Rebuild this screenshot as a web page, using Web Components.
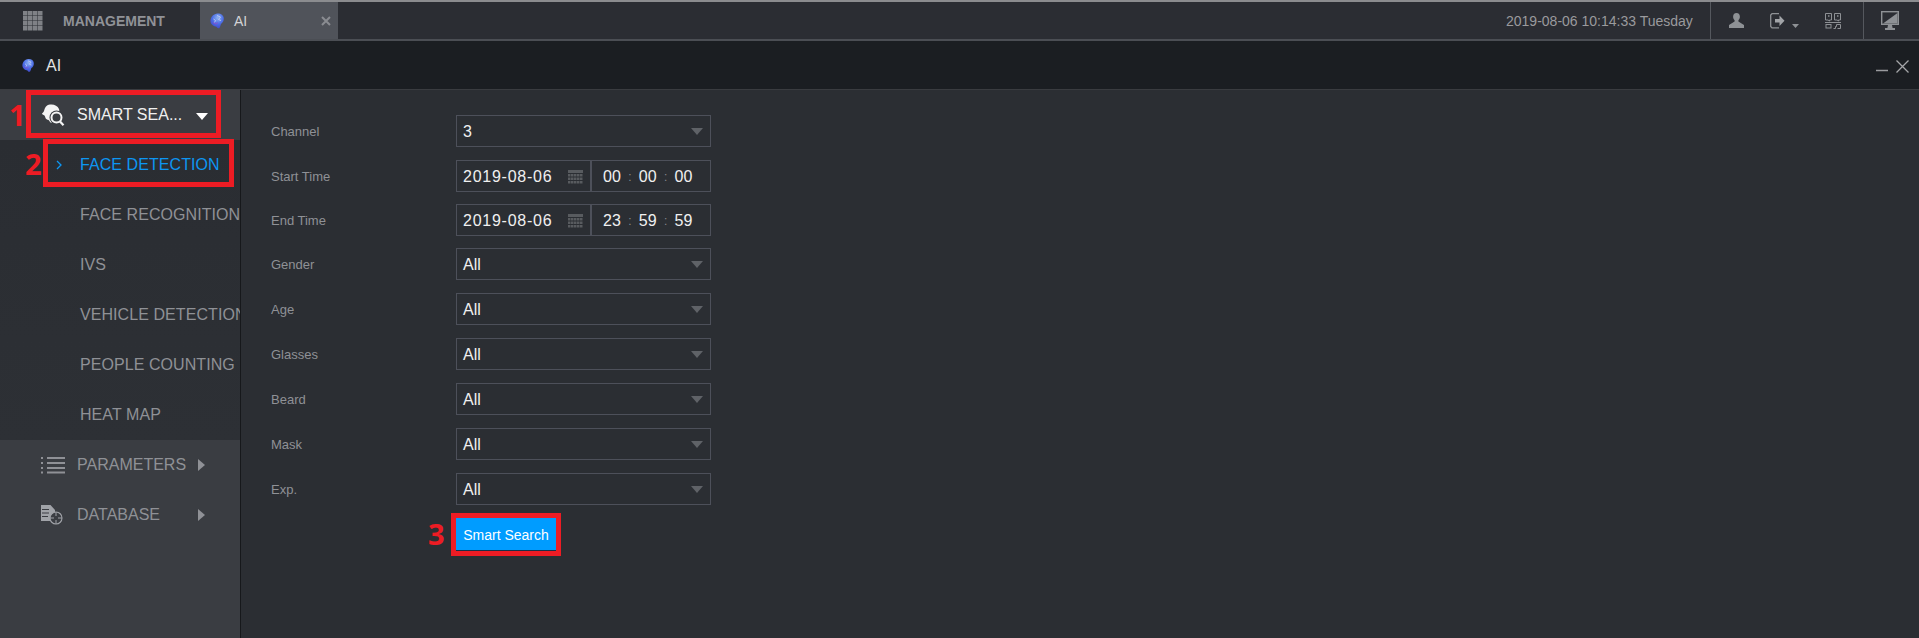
<!DOCTYPE html>
<html>
<head>
<meta charset="utf-8">
<title>AI</title>
<style>
  html, body { margin: 0; height: 100%; background: #2b2e33; overflow: hidden; }
  body { font-family: "Liberation Sans", Arial, sans-serif; }
</style>
</head>
<body>
<app-shell>
  <top-bar slot="top"></top-bar>
  <title-bar slot="title"></title-bar>
  <side-nav slot="nav">
    <nav-group label="SMART SEA..." icon="search" open></nav-group>
    <sub-menu>
      <sub-item active>FACE DETECTION</sub-item>
      <sub-item>FACE RECOGNITION</sub-item>
      <sub-item>IVS</sub-item>
      <sub-item>VEHICLE DETECTION</sub-item>
      <sub-item>PEOPLE COUNTING</sub-item>
      <sub-item>HEAT MAP</sub-item>
    </sub-menu>
    <nav-group label="PARAMETERS" icon="list"></nav-group>
    <nav-group label="DATABASE" icon="db"></nav-group>
  </side-nav>
  <search-form slot="main">
    <form-row label="Channel"><select-field value="3"></select-field></form-row>
    <form-row label="Start Time"><date-time date="2019-08-06" time="00,00,00"></date-time></form-row>
    <form-row label="End Time"><date-time date="2019-08-06" time="23,59,59"></date-time></form-row>
    <form-row label="Gender"><select-field value="All"></select-field></form-row>
    <form-row label="Age"><select-field value="All"></select-field></form-row>
    <form-row label="Glasses"><select-field value="All"></select-field></form-row>
    <form-row label="Beard"><select-field value="All"></select-field></form-row>
    <form-row label="Mask"><select-field value="All"></select-field></form-row>
    <form-row label="Exp."><select-field value="All"></select-field></form-row>
    <form-row><search-button>Smart Search</search-button></form-row>
  </search-form>
  <red-callout slot="marks" num="1" style="--x:26px;--y:90px;--w:195px;--h:48px;--nx:-17px;--ny:10px"></red-callout>
  <red-callout slot="marks" num="2" style="--x:43px;--y:139px;--w:191px;--h:48px;--nx:-18px;--ny:10px"></red-callout>
  <red-callout slot="marks" num="3" style="--x:451px;--y:513px;--w:110px;--h:43px;--nx:-23px;--ny:6px"></red-callout>
</app-shell>

<script>
const brain = (w, h) => `
  <svg width="${w}" height="${h}" viewBox="0 0 14 16">
    <defs>
      <radialGradient id="b" cx=".55" cy=".3" r=".8">
        <stop offset="0" stop-color="#8fb4f2"/>
        <stop offset=".5" stop-color="#4d6fe6"/>
        <stop offset="1" stop-color="#3d3fc4"/>
      </radialGradient>
    </defs>
    <path fill="url(#b)" d="M7 .5c3.500-.5 6.500 1.500 6.800 4.500.2 2.800-1 4.500-2.800 6-.6 1.200-.6 2.800-1.600 4-1.300.6-2.400 0-3-1.200-1-.7-2.800-.4-4-1.800C1 11 0 8.500.6 6.200 1.400 3 4 1 7 .5z"/>
    <path fill="none" stroke="#b9c6f5" stroke-width="1" d="M7 2.500l3.500 1.500-2 2.500 2.500 1M3.500 6l2 1.500-1 2"/>
    <path fill="none" stroke="#8a4fd0" stroke-width=".9" d="M3 9.500l3 1.500 2-1.500"/>
  </svg>`;

// plain helper so every element below stays a few lines
const shadow = (el, html) => {
  el.attachShadow({ mode: "open" }).innerHTML = html;
};

class AppShell extends HTMLElement {
  constructor() {
    super();
    shadow(this, `
      <style>
        :host { display: grid; grid-template: 41px 49px 1fr / 241px 1fr; height: 638px; position: relative; }
        .top { grid-column: 1 / 3; }
        .title { grid-column: 1 / 3; }
      </style>
      <div class="top"><slot name="top"></slot></div>
      <div class="title"><slot name="title"></slot></div>
      <slot name="nav"></slot>
      <slot name="main"></slot>
      <slot name="marks"></slot>
    `);
  }
}

class TopBar extends HTMLElement {
  constructor() {
    super();
    let cells = "";
    for (let y = 0; y < 4; y++) for (let x = 0; x < 4; x++) cells += `<rect x="${x * 5}" y="${y * 5}" width="4.500" height="4.500"/>`;
    shadow(this, `
      <style>
        :host { display: flex; height: 41px; box-sizing: border-box; background: #2b2d33; border-top: 2px solid #8b8c8f; border-bottom: 2px solid #4b4e54; color: #909297; font-size: 14px; align-items: stretch; }
        .home { display: flex; align-items: center; width: 200px; box-sizing: border-box; padding-left: 23px; gap: 20px; font-weight: bold; }
        .tab { display: flex; align-items: center; width: 138px; box-sizing: border-box; background: #50535a; color: #d4d4d6; padding-left: 10px; gap: 10px; }
        .tab .x { margin-left: auto; margin-right: 7px; display: flex; }
        .fill { flex: 1; }
        .clock { width: 204px; align-self: center; color: #9a9a9d; }
        .cell { display: flex; align-items: center; border-left: 1px solid #55585e; box-sizing: border-box; }
        .tools { width: 153px; padding-left: 18px; gap: 26px; }
        .screen { width: 56px; padding-left: 17px; }
        svg { display: block; }
      </style>
      <div class="home">
        <svg width="20" height="20" viewBox="0 0 20 20" fill="#7f8186">${cells}</svg>
        <span>MANAGEMENT</span>
      </div>
      <div class="tab">
        ${brain(14, 16)}
        <span>AI</span>
        <span class="x"><svg width="10" height="10" viewBox="0 0 10 10"><path d="M1 1l8 8M9 1l-8 8" stroke="#8a8c91" stroke-width="2"/></svg></span>
      </div>
      <div class="fill"></div>
      <div class="clock">2019-08-06 10:14:33 Tuesday</div>
      <div class="cell tools">
        <svg width="15" height="15" viewBox="0 0 15 15" fill="#8e9195"><path d="M7.500 0c2.200 0 3.400 1.700 3.400 3.800 0 1.500-.7 2.800-1.500 3.500v1.200L15 12v3H0v-3l5.600-3.500V7.300C4.800 6.600 4.100 5.300 4.100 3.800 4.100 1.700 5.300 0 7.500 0z"/></svg>
        <svg width="29" height="16" viewBox="0 0 29 16">
          <path d="M9 .7H2L.7 2v11.500L2 14.800h7" fill="none" stroke="#8e9195" stroke-width="1.300"/>
          <path d="M5 6h4.500V2.500L14.500 7.700 9.500 13V9.500H5z" fill="#a2a4a8"/>
          <path d="M22 11h7l-3.500 4z" fill="#8e9195"/>
        </svg>
        <svg width="16" height="16" viewBox="0 0 16 16" fill="none" stroke="#8e9195">
          <path d="M.5.500h6v6.500h-2v1l-1.500-1h-2.500zM9.500.500h6v6.500h-2v1l-1.500-1h-2.500z"/>
          <path d="M3 3h1.500M12 3h1.500" stroke-width="1.500"/>
          <path d="M0 9.500h16"/>
          <rect x="1" y="11.500" width="5" height="3.500"/>
          <path d="M8.500 15.500h2v-2h1v-2h4v4h-3"/>
        </svg>
      </div>
      <div class="cell screen">
        <svg width="18" height="19" viewBox="0 0 18 19">
          <rect x=".7" y=".7" width="16.600" height="12.600" fill="none" stroke="#8e9195" stroke-width="1.400"/>
          <path d="M2 12.500L16.500 2v10.500z" fill="#8e9195"/>
          <path d="M7 14h4l.6 3H14v2H4v-2h2.400z" fill="#8e9195"/>
        </svg>
      </div>
    `);
  }
}

class TitleBar extends HTMLElement {
  constructor() {
    super();
    shadow(this, `
      <style>
        :host { display: flex; align-items: center; height: 49px; box-sizing: border-box; background: #1b1e22; border-bottom: 1px solid #3a3c40; padding: 1px 10px 0 22px; color: #e4e4e4; font-size: 16px; gap: 12px; }
        .btns { margin-left: auto; display: flex; align-items: center; gap: 8px; padding-top: 1px; }
        svg { display: block; }
      </style>
      ${brain(12, 15)}
      <span>AI</span>
      <div class="btns">
        <svg width="12" height="12" viewBox="0 0 12 12"><path d="M0 10.500h12" stroke="#9a9b9e" stroke-width="1.500"/></svg>
        <svg width="13" height="13" viewBox="0 0 13 13"><path d="M.5.500l12 12M12.500.500l-12 12" stroke="#a5a6a9" stroke-width="1.300"/></svg>
      </div>
    `);
  }
}

class SideNav extends HTMLElement {
  constructor() {
    super();
    shadow(this, `
      <style>
        :host { display: block; background: #3a3d42; border-right: 1px solid #16181b; overflow: hidden; height: 548px; }
      </style>
      <slot></slot>
    `);
  }
}

const navIcons = {
  search: `<svg width="24" height="23" viewBox="0 0 24 23">
    <path fill="#f4f4f4" d="M9 .5c4-.5 7.500 1 9 4.500 1 3-1 9-3 12-1.500 2-4 2.500-5.500 1.500-1-.8-1-2-2-2.500-1.500-.2-2.500-.8-3-2-.2-1-.5-1.500-1-2.500-1-.5-2-1-2.500-1.500 0-1 1.500-1.500 2-3C3.800 4 5 1 9 .5z"/>
    <circle cx="15.500" cy="13.500" r="7" fill="#3a3d42"/>
    <circle cx="15.500" cy="13.500" r="5" fill="none" stroke="#f4f4f4" stroke-width="2"/>
    <path d="M19 17.500l3.500 3.800" stroke="#f4f4f4" stroke-width="2.200"/>
  </svg>`,
  list: `<svg width="24" height="18" viewBox="0 0 24 18" fill="#8f9196">
    <rect x="0" y="1" width="2" height="2"/><rect x="0" y="6" width="2" height="2"/><rect x="0" y="11" width="2" height="2"/><rect x="0" y="15.500" width="2" height="2"/>
    <rect x="6" y="1" width="18" height="2"/><rect x="6" y="6" width="18" height="2"/><rect x="6" y="11" width="18" height="2"/><rect x="6" y="15.500" width="18" height="2"/>
  </svg>`,
  db: `<svg width="22" height="20" viewBox="0 0 22 20">
    <path fill="#a0a3a8" d="M0 0h9.500L14 5v3c-2.500 .5-4.500 3-4.500 8H0z"/>
    <path d="M1 4.500h7M1 8h7M1 11.500h6" stroke="#3a3d42" stroke-width="1.200"/>
    <circle cx="15" cy="13" r="6" fill="#3a3d42" stroke="#a0a3a8" stroke-width="1.100"/>
    <path d="M15 7v4M15 15v4M9 13h4M17 13h4" stroke="#a0a3a8"/>
  </svg>`
};

class NavGroup extends HTMLElement {
  constructor() {
    super();
    const open = this.hasAttribute("open");
    const arrow = open
      ? `<svg width="12" height="7" viewBox="0 0 12 7"><path d="M0 0h12L6 7z" fill="#fff"/></svg>`
      : `<svg width="7" height="12" viewBox="0 0 7 12"><path d="M0 0l7 6-7 6z" fill="#8f9196"/></svg>`;
    shadow(this, `
      <style>
        :host { display: flex; align-items: center; height: 50px; position: relative; color: ${open ? "#f0f0f0" : "#8f9196"}; font-size: 16px; }
        .icon { width: 77px; display: flex; justify-content: flex-start; padding-left: 41px; box-sizing: border-box; }
        .arrow { position: absolute; left: ${open ? 196 : 198}px; top: ${open ? 23 : 19}px; }
        svg { display: block; }
      </style>
      <span class="icon">${navIcons[this.getAttribute("icon")]}</span>
      <span>${this.getAttribute("label")}</span>
      <span class="arrow">${arrow}</span>
    `);
  }
}

class SubMenu extends HTMLElement {
  constructor() {
    super();
    shadow(this, `
      <style>:host { display: block; background: linear-gradient(#2a2d32, #2d3035); }</style>
      <slot></slot>
    `);
  }
}

class SubItem extends HTMLElement {
  constructor() {
    super();
    const active = this.hasAttribute("active");
    shadow(this, `
      <style>
        :host { display: flex; align-items: center; height: 50px; padding-left: 56px; font-size: 16px; letter-spacing: .07px; color: ${active ? "#0d96f2" : "#8f9196"}; white-space: nowrap; overflow: hidden; }
        .chev { width: 24px; flex: none; display: flex; }
      </style>
      <span class="chev">${active ? `<svg width="7" height="10" viewBox="0 0 7 10"><path d="M1 1l4 4-4 4" fill="none" stroke="#0d96f2" stroke-width="1.300"/></svg>` : ""}</span>
      <span><slot></slot></span>
    `);
  }
}

class SearchForm extends HTMLElement {
  constructor() {
    super();
    shadow(this, `
      <style>
        :host { display: grid; align-content: start; padding: 25px 0 0 30px; grid-template-rows: 45px 44px 44px 45px 45px 45px 45px 45px 45px 33px; }
      </style>
      <slot></slot>
    `);
  }
}

class FormRow extends HTMLElement {
  constructor() {
    super();
    shadow(this, `
      <style>
        :host { display: flex; align-items: flex-start; }
        .label { width: 185px; height: 32px; line-height: 34px; font-size: 13px; color: #8f9196; flex: none; }
      </style>
      <div class="label">${this.getAttribute("label") || ""}</div>
      <slot></slot>
    `);
  }
}

class SelectField extends HTMLElement {
  constructor() {
    super();
    shadow(this, `
      <style>
        :host { display: flex; align-items: center; width: 255px; height: 32px; box-sizing: border-box; border: 1px solid #4d505a; padding: 1px 7px 0 6px; font-size: 16px; color: #f0f0f0; }
        svg { margin-left: auto; display: block; }
      </style>
      <span>${this.getAttribute("value")}</span>
      <svg width="12" height="7" viewBox="0 0 12 7"><path d="M0 0h12L6 7z" fill="#5f6267"/></svg>
    `);
  }
}

class DateTime extends HTMLElement {
  constructor() {
    super();
    const [h, m, s] = this.getAttribute("time").split(",");
    let cal = `<rect width="15" height="3" fill="#585b5f"/>`;
    for (let y = 0; y < 3; y++) for (let x = 0; x < 5; x++) cal += `<rect x="${x * 3}" y="${4 + y * 3.500}" width="2.500" height="2.500" fill="#585b5f"/>`;
    shadow(this, `
      <style>
        :host { display: flex; width: 255px; height: 32px; font-size: 16px; color: #f0f0f0; }
        .box { display: flex; align-items: center; height: 32px; box-sizing: border-box; border: 1px solid #4d505a; padding-top: 1px; }
        .date { width: 135px; padding-left: 6px; letter-spacing: .75px; }
        .date svg { margin-left: auto; margin-right: 7px; display: block; }
        .time { width: 120px; padding-left: 11px; gap: 7px; }
        i { font-style: normal; color: #85888d; width: 4px; font-size: 12px; text-align: center; }
      </style>
      <div class="box date"><span>${this.getAttribute("date")}</span><svg width="15" height="14" viewBox="0 0 15 14">${cal}</svg></div>
      <div class="box time"><span>${h}</span><i>:</i><span>${m}</span><i>:</i><span>${s}</span></div>
    `);
  }
}

class SearchButton extends HTMLElement {
  constructor() {
    super();
    shadow(this, `
      <style>
        :host { display: flex; align-items: center; justify-content: center; width: 100px; height: 33px; box-sizing: border-box; background: #009cff; border-bottom: 1px solid #15324a; padding-top: 1px; color: #fff; font-size: 14px; }
      </style>
      <slot></slot>
    `);
  }
}

class RedCallout extends HTMLElement {
  constructor() {
    super();
    shadow(this, `
      <style>
        :host { position: absolute; left: var(--x); top: var(--y); width: var(--w); height: var(--h); box-sizing: border-box; border: 5px solid #ed1c24; }
        span { position: absolute; left: var(--nx); top: var(--ny); transform: translate(-5px, -5px); font: bold 29px/30px "Open Sans", sans-serif; color: #ed1c24; }
      </style>
      <span>${this.getAttribute("num")}</span>
    `);
  }
}

customElements.define("app-shell", AppShell);
customElements.define("top-bar", TopBar);
customElements.define("title-bar", TitleBar);
customElements.define("side-nav", SideNav);
customElements.define("nav-group", NavGroup);
customElements.define("sub-menu", SubMenu);
customElements.define("sub-item", SubItem);
customElements.define("search-form", SearchForm);
customElements.define("form-row", FormRow);
customElements.define("select-field", SelectField);
customElements.define("date-time", DateTime);
customElements.define("search-button", SearchButton);
customElements.define("red-callout", RedCallout);
</script>
</body>
</html>
